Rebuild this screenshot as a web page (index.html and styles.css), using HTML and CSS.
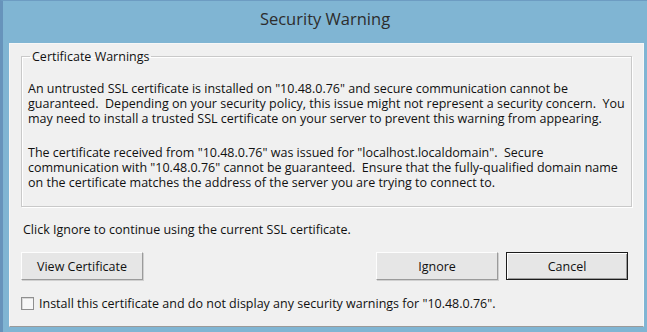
FILE: index.html
```html
<!DOCTYPE html>
<html lang="en">
  <head>
    <meta charset="UTF-8" />
    <meta name="viewport" content="width=device-width, initial-scale=1.0" />
    <title>Security Warning</title>
    <link rel="stylesheet" href="styles.css">
  </head>
  <body>
    <div class="window">
      <div class="title-bar">Security Warning</div>
      <div class="panel">
        <fieldset class="group">
          <legend>Certificate Warnings</legend>
          <p>An untrusted SSL certificate is installed on "10.48.0.76" and secure communication cannot be<br>
            guaranteed.&nbsp; Depending on your security policy, this issue might not represent a security concern.&nbsp; You<br>
            may need to install a trusted SSL certificate on your server to prevent this warning from appearing.</p>
          <p>The certificate received from "10.48.0.76" was issued for "localhost.localdomain".&nbsp; Secure<br>
            communication with "10.48.0.76" cannot be guaranteed.&nbsp; Ensure that the fully-qualified domain name<br>
            on the certificate matches the address of the server you are trying to connect to.</p>
        </fieldset>

        <div class="hint">Click Ignore to continue using the current SSL certificate.</div>

        <div class="buttons">
          <button id="view-btn">View Certificate</button>
          <div class="buttons-right">
            <button id="ignore-btn">Ignore</button>
            <button id="cancel-btn" class="default">Cancel</button>
          </div>
        </div>

        <label class="check">
          <span class="box"></span>
          Install this certificate and do not display any security warnings for "10.48.0.76".
        </label>
      </div>
    </div>
  </body>
</html>
```

FILE: styles.css
```css
body {
  margin: 0;
  font-family: "Open Sans", "Noto Sans", sans-serif;
  background-color: #80b5d3;
}

.window {
  height: 332px;
  box-sizing: border-box;
  border-top: 1px solid #6d9cc2;
  border-left: 3px solid #6793bb;
}

.title-bar {
  height: 42px;
  line-height: 35px;
  text-align: center;
  font-size: 16.5px;
  color: #2d2d2d;
}

.panel {
  margin-left: 6px;
  margin-right: 3px;
  height: 284px;
  box-sizing: border-box;
  padding: 5px 11px 0 11px;
  background-color: #f0f0f0;
  border: 1px solid #f7f7f7;
  border-bottom: 1px solid #9a9a9a;
  font-size: 12.5px;
  line-height: 15px;
  color: #111;
}

.group {
  margin: 0;
  padding: 17px 6px 16px 6px;
  border: 1px solid #c9c9c9;
  box-shadow: inset 1px 1px 0 #fff, 1px 1px 0 #fff;
}

.group legend {
  margin-left: 2px;
  padding: 0 2px;
}

.group p {
  margin: 0;
}

.group p + p {
  margin-top: 19px;
}

.hint {
  margin-top: 15px;
  padding-left: 2px;
}

.buttons {
  display: flex;
  justify-content: space-between;
  margin-top: 15px;
  padding-right: 4px;
}

.buttons-right {
  display: flex;
  gap: 8px;
}

button {
  width: 122px;
  height: 28px;
  font-family: inherit;
  font-size: 12.5px;
  color: #111;
  background-color: #e6e6e6;
  border: 1px solid;
  border-color: #fdfdfd #9b9b9b #9b9b9b #fdfdfd;
  box-shadow: 1px 1px 0 #d0d0d0;
  padding: 0;
}

button.default {
  border: 1px solid #1c1c1c;
  box-shadow: inset 1px 1px 0 #fff, inset -1px -1px 0 #9b9b9b;
}

.check {
  display: flex;
  align-items: center;
  gap: 5px;
  margin-top: 16px;
}

.box {
  width: 11px;
  height: 11px;
  border: 1px solid #8f8f8f;
  background-color: #f7f7f7;
  box-shadow: inset 1px 1px 0 #d8d8d8;
}
```
